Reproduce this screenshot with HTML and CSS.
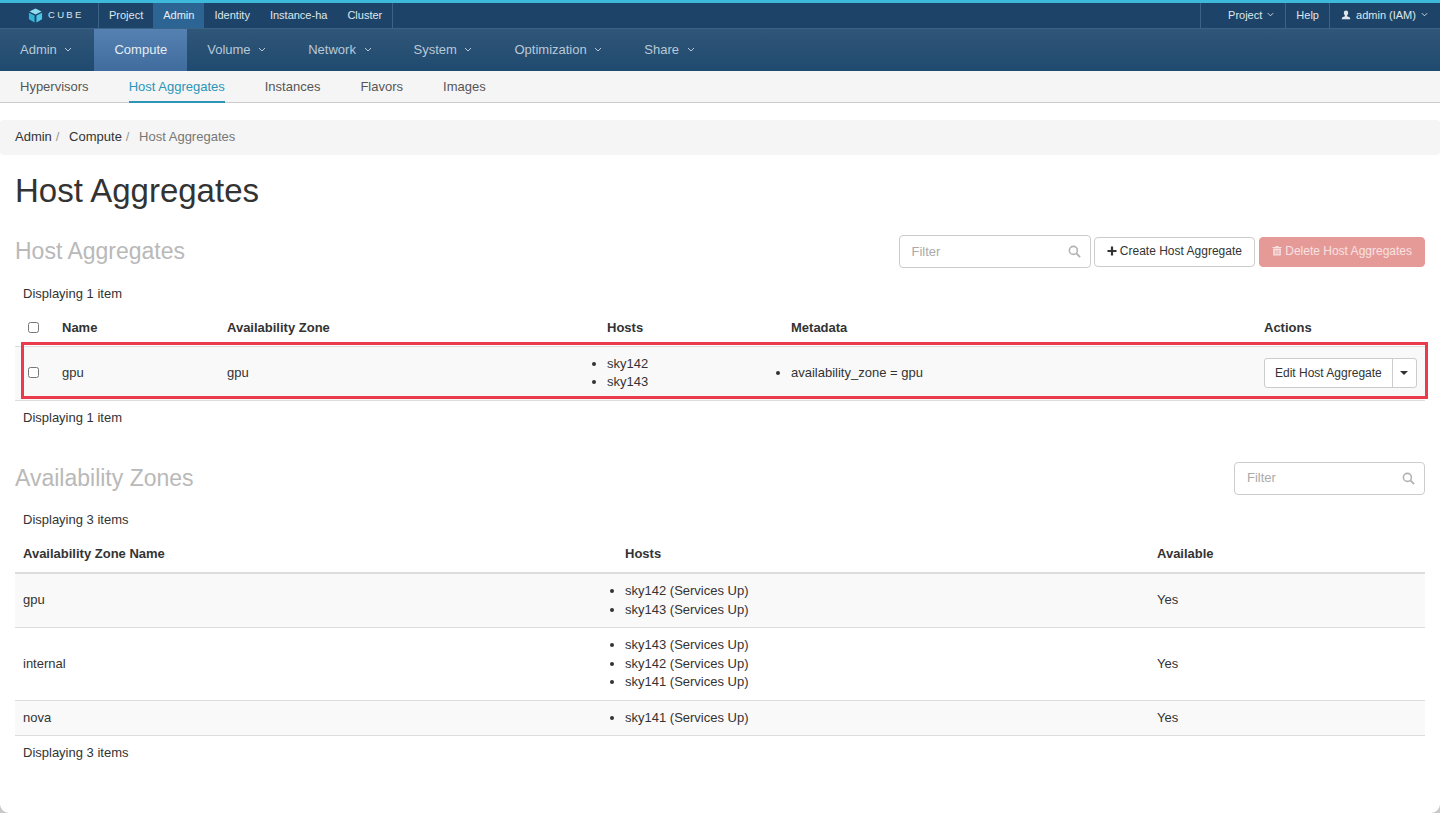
FILE: index.html
```html
<!DOCTYPE html>
<html>
<head>
    <meta charset="UTF-8">
    <meta name="viewport" content="width=device-width, initial-scale=1.0">
    <title>Host Aggregates</title>
    <link rel="stylesheet" href="styles.css">
</head>
<body>
<div class="page">
    <div class="top-nav">
        <div class="brand">
            <svg class="brand-logo" viewBox="0 0 16 16" width="15" height="15">
                <path d="M8 0.5 L14.5 3.8 L8 7 L1.5 3.8 Z" fill="#8fdcf0"/>
                <path d="M1 5 L7 8 L7 15.5 L1 12 Z" fill="#35b4d8"/>
                <path d="M15 5 L9 8 L9 15.5 L15 12 Z" fill="#4cc6e6"/>
            </svg>
            <span class="brand-name">CUBE</span>
        </div>
        <ul class="region-tabs">
            <li>Project</li>
            <li class="active">Admin</li>
            <li>Identity</li>
            <li>Instance-ha</li>
            <li>Cluster</li>
        </ul>
        <ul class="user-menu">
            <li class="project-menu">Project <svg class="caret-sm" viewBox="0 0 8 5"><path d="M1 1 L4 4 L7 1" fill="none" stroke="currentColor" stroke-width="1"/></svg></li>
            <li class="help-menu">Help</li>
            <li class="account-menu">
                <svg class="user-icon" viewBox="0 0 12 12"><path d="M6 0.5 C7.8 0.5 8.6 1.8 8.6 3.4 C8.6 4.8 8 5.9 7.3 6.5 L7.3 7.4 C9 8 11 8.6 11 10 L11 11 L1 11 L1 10 C1 8.6 3 8 4.7 7.4 L4.7 6.5 C4 5.9 3.4 4.8 3.4 3.4 C3.4 1.8 4.2 0.5 6 0.5 Z" fill="currentColor"/></svg>
                admin (IAM) <svg class="caret-sm" viewBox="0 0 8 5"><path d="M1 1 L4 4 L7 1" fill="none" stroke="currentColor" stroke-width="1"/></svg>
            </li>
        </ul>
    </div>

    <ul class="main-nav">
        <li>Admin <svg class="caret" viewBox="0 0 8 5"><path d="M1 1 L4 4 L7 1" fill="none" stroke="currentColor" stroke-width="1"/></svg></li>
        <li class="active">Compute</li>
        <li>Volume <svg class="caret" viewBox="0 0 8 5"><path d="M1 1 L4 4 L7 1" fill="none" stroke="currentColor" stroke-width="1"/></svg></li>
        <li>Network <svg class="caret" viewBox="0 0 8 5"><path d="M1 1 L4 4 L7 1" fill="none" stroke="currentColor" stroke-width="1"/></svg></li>
        <li>System <svg class="caret" viewBox="0 0 8 5"><path d="M1 1 L4 4 L7 1" fill="none" stroke="currentColor" stroke-width="1"/></svg></li>
        <li>Optimization <svg class="caret" viewBox="0 0 8 5"><path d="M1 1 L4 4 L7 1" fill="none" stroke="currentColor" stroke-width="1"/></svg></li>
        <li>Share <svg class="caret" viewBox="0 0 8 5"><path d="M1 1 L4 4 L7 1" fill="none" stroke="currentColor" stroke-width="1"/></svg></li>
    </ul>

    <ul class="sub-nav">
        <li>Hypervisors</li>
        <li class="active">Host Aggregates</li>
        <li>Instances</li>
        <li>Flavors</li>
        <li>Images</li>
    </ul>

    <div class="breadcrumb">
        <span class="crumb">Admin</span><span class="sep">/</span>
        <span class="crumb">Compute</span><span class="sep">/</span>
        <span class="crumb current">Host Aggregates</span>
    </div>

    <h1 class="page-title">Host Aggregates</h1>

    <div class="section-head first">
        <h2>Host Aggregates</h2>
        <div class="actions">
            <div class="filter wide">
                <span>Filter</span>
                <svg class="search" viewBox="0 0 14 14"><circle cx="5.8" cy="5.8" r="4.3" fill="none" stroke="currentColor" stroke-width="1.7"/><path d="M9 9 L13 13" stroke="currentColor" stroke-width="2"/></svg>
            </div>
            <button class="btn">
                <svg class="plus" viewBox="0 0 10 10"><path d="M5 0.5 V9.5 M0.5 5 H9.5" stroke="currentColor" stroke-width="2.2"/></svg>
                Create Host Aggregate
            </button>
            <button class="btn danger">
                <svg class="trash" viewBox="0 0 10 11"><path d="M3.5 1 H6.5 V2 H9.5 V3 H0.5 V2 H3.5 Z M1.2 3.6 H8.8 V10.5 H1.2 Z" fill="currentColor"/><path d="M3.2 5 V9.5 M5 5 V9.5 M6.8 5 V9.5" stroke="#e59a98" stroke-width="0.8"/></svg>
                Delete Host Aggregates
            </button>
        </div>
    </div>

    <div class="table-wrap">
        <div class="count">Displaying 1 item</div>
        <table class="aggregates">
            <colgroup>
                <col style="width:39px"><col style="width:165px"><col style="width:380px"><col style="width:184px"><col style="width:473px"><col>
            </colgroup>
            <thead>
                <tr>
                    <th class="check"><span class="checkbox"></span></th>
                    <th>Name</th>
                    <th>Availability Zone</th>
                    <th>Hosts</th>
                    <th>Metadata</th>
                    <th>Actions</th>
                </tr>
            </thead>
            <tbody>
                <tr class="striped">
                    <td class="check"><span class="checkbox"></span></td>
                    <td>gpu</td>
                    <td>gpu</td>
                    <td><ul class="cell-list"><li>sky142</li><li>sky143</li></ul></td>
                    <td><ul class="cell-list"><li>availability_zone = gpu</li></ul></td>
                    <td>
                        <div class="split-btn">
                            <span class="split-main">Edit Host Aggregate</span>
                            <span class="split-caret"><i></i></span>
                        </div>
                    </td>
                </tr>
            </tbody>
        </table>
        <div class="highlight"></div>
        <div class="count bottom">Displaying 1 item</div>
    </div>

    <div class="section-head second">
        <h2>Availability Zones</h2>
        <div class="actions">
            <div class="filter">
                <span>Filter</span>
                <svg class="search" viewBox="0 0 14 14"><circle cx="5.8" cy="5.8" r="4.3" fill="none" stroke="currentColor" stroke-width="1.7"/><path d="M9 9 L13 13" stroke="currentColor" stroke-width="2"/></svg>
            </div>
        </div>
    </div>

    <div class="table-wrap zones-wrap">
        <div class="count">Displaying 3 items</div>
        <table class="zones">
            <colgroup>
                <col style="width:602px"><col style="width:532px"><col>
            </colgroup>
            <thead>
                <tr>
                    <th>Availability Zone Name</th>
                    <th>Hosts</th>
                    <th>Available</th>
                </tr>
            </thead>
            <tbody>
                <tr class="striped">
                    <td>gpu</td>
                    <td><ul class="cell-list"><li>sky142 (Services Up)</li><li>sky143 (Services Up)</li></ul></td>
                    <td>Yes</td>
                </tr>
                <tr>
                    <td>internal</td>
                    <td><ul class="cell-list"><li>sky143 (Services Up)</li><li>sky142 (Services Up)</li><li>sky141 (Services Up)</li></ul></td>
                    <td>Yes</td>
                </tr>
                <tr class="striped">
                    <td>nova</td>
                    <td><ul class="cell-list"><li>sky141 (Services Up)</li></ul></td>
                    <td>Yes</td>
                </tr>
            </tbody>
        </table>
        <div class="count bottom">Displaying 3 items</div>
    </div>
</div>
</body>
</html>
```

FILE: styles.css
```css
* {
    box-sizing: border-box;
}

html, body {
    height: 100%;
}

body {
    margin: 0;
    background: #c8c8c8;
    font-family: "Liberation Sans", Arial, sans-serif;
    font-size: 13px;
    line-height: 18.5px;
    color: #333;
    overflow: hidden;
}

ul {
    list-style: none;
    margin: 0;
    padding: 0;
}

.page {
    height: 100%;
    background: #fff;
    border-radius: 0 0 9px 9px;
    overflow: hidden;
}

/* top bar */
.top-nav {
    display: flex;
    align-items: stretch;
    height: 29px;
    background: #1d4468;
    border-top: 3px solid #3db9dc;
    border-bottom: 1px solid #3a6388;
    font-size: 11px;
    color: #dfe7ee;
}

.brand {
    width: 99px;
    display: flex;
    align-items: center;
    padding-left: 28px;
    border-right: 1px solid #3a6388;
}

.brand-logo {
    margin-right: 5px;
}

.brand-name {
    font-size: 9.5px;
    letter-spacing: 2.3px;
    color: #dbe4ec;
}

.region-tabs {
    display: flex;
    border-right: 1px solid #3a6388;
}

.region-tabs li {
    padding: 0 10px;
    line-height: 25px;
}

.region-tabs li.active {
    background: #2c6493;
    color: #e8eef4;
}

.user-menu {
    display: flex;
    margin-left: auto;
}

.user-menu li {
    padding: 0 11px;
    line-height: 25px;
    border-left: 1px solid #3a6388;
}

.user-menu li.project-menu {
    padding-left: 27px;
}

.user-menu li.help-menu {
    padding: 0 10px;
}

.user-menu li.account-menu {
    padding-right: 12px;
}

.caret-sm {
    width: 7px;
    height: 5px;
    margin: 0 0 2px 2px;
}

.user-icon {
    width: 10px;
    height: 10px;
    margin-right: 2px;
    vertical-align: -1px;
}

/* second bar */
.main-nav {
    display: flex;
    height: 42px;
    background: linear-gradient(#305678, #1f4a6f);
    font-size: 13px;
    color: #b9c9d7;
}

.main-nav li {
    padding: 0 22px 0 20px;
    line-height: 42px;
}

.main-nav li.active {
    padding: 0 20px;
    background: linear-gradient(#5481b1, #3f6c9c);
    color: #e6edf4;
}

.caret {
    width: 8px;
    height: 5px;
    margin: 0 0 2px 4px;
}

/* third bar */
.sub-nav {
    display: flex;
    gap: 40px;
    height: 32px;
    padding-left: 20px;
    background: #f5f5f5;
    border-bottom: 1px solid #ccc;
    color: #555;
}

.sub-nav li {
    line-height: 31px;
    height: 32px;
}

.sub-nav li.active {
    color: #2b96b8;
    border-bottom: 2px solid #2b96b8;
}

.breadcrumb {
    margin-top: 17px;
    height: 35px;
    padding-left: 15px;
    background: #f5f5f5;
    border-radius: 4px;
    line-height: 34px;
}

.sep {
    margin: 0 6px 0 4px;
    color: #999;
}

.crumb.current {
    color: #777;
}

.page-title {
    margin: 18px 0 0 15px;
    font-size: 33px;
    font-weight: 400;
    line-height: 36px;
}

.section-head {
    display: flex;
    align-items: center;
    justify-content: space-between;
    height: 33px;
    padding: 0 15px;
}

.section-head.first {
    margin-top: 26px;
}

.section-head.second {
    margin-top: 35px;
}

.section-head h2 {
    margin: 0;
    font-size: 23px;
    font-weight: 400;
    color: #b9b9b9;
}

.actions {
    display: flex;
    align-items: center;
    gap: 4px;
}

.filter {
    display: flex;
    align-items: center;
    justify-content: space-between;
    width: 191px;
    height: 33px;
    padding: 1px 9px 0 12px;
    border: 1px solid #ccc;
    border-radius: 4px;
    color: #aaa;
}

.filter.wide {
    width: 192px;
    margin-right: -1px;
}

.search {
    width: 13px;
    height: 13px;
    margin-top: -1px;
    color: #b2b2b2;
}

.btn {
    height: 30px;
    padding: 0 12px 2px;
    border: 1px solid #ccc;
    border-radius: 4px;
    background: #fff;
    color: #333;
    font-family: inherit;
    font-size: 12px;
}

.btn.danger {
    background: #e59a98;
    border-color: #e59a98;
    color: #f8e2e1;
}

.plus {
    width: 10px;
    height: 10px;
    vertical-align: -1px;
}

.trash {
    width: 10px;
    height: 11px;
    vertical-align: -1px;
}

/* tables */
.table-wrap {
    position: relative;
    padding: 0 15px;
}

.count {
    padding: 0 8px;
    height: 18px;
    margin-top: 17px;
}

.count.bottom {
    margin-top: 8px;
}

.zones-wrap .count {
    margin-top: 16px;
}

.zones-wrap .count.bottom {
    margin-top: 8px;
}

table {
    width: 100%;
    border-collapse: collapse;
    table-layout: fixed;
}

th {
    text-align: left;
    font-weight: 700;
    padding: 8px;
}

td {
    padding: 8px;
    vertical-align: middle;
}

.aggregates {
    margin-top: 8px;
}

.aggregates td {
    border-top: 1px solid #ddd;
    border-bottom: 1px solid #ddd;
}

.zones {
    margin-top: 8px;
}

.zones thead th {
    padding-bottom: 9px;
    border-bottom: 2px solid #ddd;
}

.zones td {
    border-bottom: 1px solid #ddd;
}

.striped {
    background: #f9f9f9;
}

.aggregates .check {
    padding-left: 13px;
    padding-right: 0;
}

.checkbox {
    display: inline-block;
    width: 11px;
    height: 11px;
    border: 1px solid #767676;
    border-radius: 2.5px;
    background: #fff;
    vertical-align: -1px;
}

.cell-list {
    list-style: disc;
    padding-left: 0;
}

.split-btn {
    display: inline-flex;
    height: 30px;
    border: 1px solid #ccc;
    border-radius: 3px;
    background: #fff;
    font-size: 12px;
    line-height: 28px;
    white-space: nowrap;
}

.split-main {
    padding: 0 10px;
    border-right: 1px solid #ccc;
}

.split-caret {
    display: flex;
    align-items: center;
    padding: 0 7.5px;
}

.split-caret i {
    border-top: 4px solid #333;
    border-left: 4px solid transparent;
    border-right: 4px solid transparent;
}

.highlight {
    position: absolute;
    left: 21px;
    top: 57px;
    width: 1407px;
    height: 57px;
    border: 3px solid #ea3a4c;
    pointer-events: none;
}
```
